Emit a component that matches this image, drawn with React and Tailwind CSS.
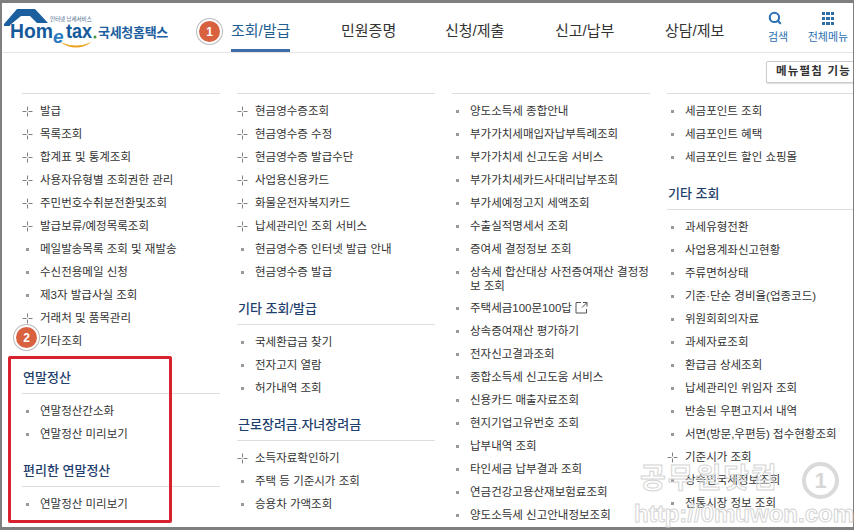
import { Search } from "lucide-react";

const columns = [
  [
    {
      items: [
        ["+", "발급"], ["+", "목록조회"], ["+", "합계표 및 통계조회"], ["+", "사용자유형별 조회권한 관리"],
        ["+", "주민번호수취분전환및조회"], ["+", "발급보류/예정목록조회"], ["-", "메일발송목록 조회 및 재발송"],
        ["-", "수신전용메일 신청"], ["-", "제3자 발급사실 조회"], ["+", "거래처 및 품목관리"], ["+", "기타조회"],
      ],
    },
    { title: "연말정산", items: [["-", "연말정산간소화"], ["-", "연말정산 미리보기"]] },
    { title: "편리한 연말정산", items: [["-", "연말정산 미리보기"]] },
  ],
  [
    {
      items: [
        ["+", "현금영수증조회"], ["+", "현금영수증 수정"], ["+", "현금영수증 발급수단"], ["+", "사업용신용카드"],
        ["+", "화물운전자복지카드"], ["+", "납세관리인 조회 서비스"], ["-", "현금영수증 인터넷 발급 안내"], ["-", "현금영수증 발급"],
      ],
    },
    { title: "기타 조회/발급", items: [["-", "국세환급금 찾기"], ["-", "전자고지 열람"], ["-", "허가내역 조회"]] },
    { title: "근로장려금.자녀장려금", items: [["+", "소득자료확인하기"], ["-", "주택 등 기준시가 조회"], ["-", "승용차 가액조회"]] },
  ],
  [
    {
      items: [
        ["-", "양도소득세 종합안내"], ["-", "부가가치세매입자납부특례조회"], ["-", "부가가치세 신고도움 서비스"],
        ["-", "부가가치세카드사대리납부조회"], ["-", "부가세예정고지 세액조회"], ["-", "수출실적명세서 조회"],
        ["-", "증여세 결정정보 조회"], ["-", "상속세 합산대상 사전증여재산 결정정보 조회"], ["-", "주택세금100문100답", true],
        ["-", "상속증여재산 평가하기"], ["-", "전자신고결과조회"], ["-", "종합소득세 신고도움 서비스"],
        ["-", "신용카드 매출자료조회"], ["-", "현지기업고유번호 조회"], ["-", "납부내역 조회"], ["-", "타인세금 납부결과 조회"],
        ["-", "연금건강고용산재보험료조회"], ["-", "양도소득세 신고안내정보조회"],
      ],
    },
  ],
  [
    { items: [["-", "세금포인트 조회"], ["-", "세금포인트 혜택"], ["-", "세금포인트 할인 쇼핑몰"]] },
    {
      title: "기타 조회",
      items: [
        ["-", "과세유형전환"], ["-", "사업용계좌신고현황"], ["-", "주류면허상태"], ["-", "기준·단순 경비율(업종코드)"],
        ["-", "위원회회의자료"], ["-", "과세자료조회"], ["-", "환급금 상세조회"], ["-", "납세관리인 위임자 조회"],
        ["-", "반송된 우편고지서 내역"], ["-", "서면(방문,우편등) 접수현황조회"], ["+", "기준시가 조회"],
        ["-", "상속인국세정보조회"], ["-", "전통시장 정보 조회"],
      ],
    },
  ],
];

const navItems = [
  ["조회/발급", "w-[110px]", true],
  ["민원증명", "w-[104px]"],
  ["신청/제출", "w-[110px]"],
  ["신고/납부", "w-[110px]"],
  ["상담/제보", "w-[103px]"],
];

function PlusMark() {
  return (
    <svg width="11" height="11" viewBox="0 0 11 11" className="shrink-0" stroke="#808080" strokeWidth="1" fill="none">
      <path d="M5.5 0.5V4.5M5.5 6.5V10.5M0.5 5.5H4.5M6.5 5.5H10.5" />
    </svg>
  );
}

function ExternalMark() {
  return (
    <svg width="13" height="13" viewBox="0 0 13 13" className="inline-block ml-[3px] align-[-2px]" stroke="#555" strokeWidth="1" fill="none">
      <path d="M6 1.5H1V12H11.5V8M7 6.5L12 1.5M8 1.5H12V5.5" />
    </svg>
  );
}

function MenuRow({ kind, label, external }) {
  return (
    <li className="flex min-h-[23px] pt-[5px] pb-[3px] leading-[14px] text-[11.5px] text-[#333]">
      <span className="w-[18px] h-[14px] shrink-0 flex items-center">
        {kind === "+" ? <PlusMark /> : <span className="ml-[4px] w-[3px] h-[3px] bg-[#999]" />}
      </span>
      <span>
        {label}
        {external && <ExternalMark />}
      </span>
    </li>
  );
}

function Badge({ n, className }) {
  return (
    <div className={`absolute w-[25px] h-[25px] rounded-full bg-[#d8623f] border-2 border-white shadow-[0_0_0_1px_#bbb] flex items-center justify-center text-white text-[12px] font-bold ${className}`}>
      {n}
    </div>
  );
}

function Logo() {
  return (
    <svg width="94" height="44" viewBox="0 0 94 44" className="shrink-0 overflow-visible">
      <path d="M0 18L13 3H31L44 17H33L26 10H17L6 19V20H0Z" fill="#1c5f9e" />
      <text x="46" y="15" fontSize="5.5" fill="#4a6a8a" fontFamily="Noto Sans CJK KR">인터넷 납세서비스</text>
      <text x="6" y="32" fontSize="21" fontWeight="700" fill="#155a9a" fontFamily="Liberation Sans" textLength="43" lengthAdjust="spacingAndGlyphs">Hom</text>
      <text x="49" y="37" fontSize="19" fontWeight="700" fontStyle="italic" fill="#2b7cc0" fontFamily="Liberation Sans">e</text>
      <text x="62" y="32" fontSize="20" fontWeight="700" fill="#155a9a" fontFamily="Liberation Sans" textLength="26" lengthAdjust="spacingAndGlyphs">tax</text>
      <circle cx="91" cy="31" r="1.5" fill="#3c9a3c" />
      <path d="M56 36Q72 47 88 36Q72 43 56 36Z" fill="#eda21e" />
    </svg>
  );
}

export default function App() {
  return (
    <div className="relative w-[854px] h-[530px] overflow-hidden bg-[#7f7f7f] pt-[3px] pl-[2px] pr-[1px] pb-[3px] font-['Liberation_Sans','Noto_Sans_CJK_KR',sans-serif]">
      <div className="h-full bg-white overflow-hidden">
        {/* Header */}
        <header className="flex h-[50px] border-b border-[#e6e6e6]">
          <div className="w-[229px] flex items-start pt-[3px] pl-[2px]">
            <Logo />
            <span className="mt-[17px] text-[13px] font-bold text-[#1d5f9f] tracking-[-0.3px] whitespace-nowrap">국세청홈택스</span>
          </div>
          <nav className="flex">
            {navItems.map(([label, width, active]) => (
              <div key={label} className={`${width} flex`}>
                <span className={`flex items-center h-[49px] pt-[11px] border-b-[3px] text-[15px] whitespace-nowrap ${active ? "border-[#3f6ca8] text-[#1f5f92]" : "border-transparent text-[#333]"}`}>
                  {label}
                </span>
              </div>
            ))}
          </nav>
          <div className="flex flex-col items-start w-[22px] pt-[8px] text-[#2a6fb0]">
            <Search size={14} strokeWidth={3.5} />
            <span className="mt-[4px] text-[11px] leading-[16px] whitespace-nowrap">검색</span>
          </div>
          <div className="ml-[16px] flex flex-col items-center w-[44px] pt-[9px] text-[#2a6fb0]">
            <div className="grid grid-cols-3 gap-[1.5px] w-[13px] h-[13px] shrink-0">
              {[0, 1, 2, 3, 4, 5, 6, 7, 8].map((i) => (
                <span key={i} className="bg-[#2f6fa8]" />
              ))}
            </div>
            <span className="mt-[4px] text-[11px] leading-[16px] whitespace-nowrap">전체메뉴</span>
          </div>
        </header>

        {/* Toolbar */}
        <div className="flex h-[40px] pt-[8px]">
          <button className="ml-[764px] w-[96px] h-[22px] shrink-0 border border-[#ccc] rounded-[2px] bg-white shadow-[0_1px_1px_#ddd] pl-[9px] text-left text-[11.5px] font-bold tracking-[1.2px] text-[#333] whitespace-nowrap">
            메뉴펼침 기능
          </button>
        </div>

        {/* Menu columns */}
        <main className="grid grid-cols-[198px_198px_198px_186px] gap-x-[17px] pl-[20px]">
          {columns.map((sections, c) => (
            <div key={c}>
              {sections.map((section, s) => (
                <section key={s}>
                  <h3 className={`border-b border-[#ddd] ${section.title ? "pt-[16px] pb-[6px] pl-[1px] leading-[19px] text-[13px] font-medium text-[#1f3f6e]" : "h-px"}`}>
                    {section.title}
                  </h3>
                  <ul className="pt-[5px]">
                    {section.items.map(([kind, label, external]) => (
                      <MenuRow key={label} kind={kind} label={label} external={external} />
                    ))}
                  </ul>
                </section>
              ))}
            </div>
          ))}
        </main>
      </div>

      {/* Annotations */}
      <Badge n="1" className="left-[197px] top-[19px]" />
      <Badge n="2" className="left-[14px] top-[325px]" />
      <div className="absolute left-[8px] top-[356px] w-[164px] h-[167px] border-[3px] border-[#d8232f] rounded-[2px]" />

      {/* Watermark */}
      <div className="absolute left-[640px] top-[460px] text-[28px] leading-[38px] tracking-[2px] font-bold text-transparent [-webkit-text-stroke:1px_#d4d4d4] whitespace-nowrap">
        공무원닷컴
      </div>
      <div className="absolute left-[802px] top-[462px] w-[37px] h-[37px] rounded-full border-[4px] border-[#dadada] flex items-center justify-center text-[#d6d6d6] text-[22px] font-bold">
        1
      </div>
      <div className="absolute left-[634px] top-[498px] w-[214px] text-[24px] leading-[32px] font-bold text-transparent [-webkit-text-stroke:1px_#d4d4d4] whitespace-nowrap">
        http://0muwon.com
      </div>
    </div>
  );
}
